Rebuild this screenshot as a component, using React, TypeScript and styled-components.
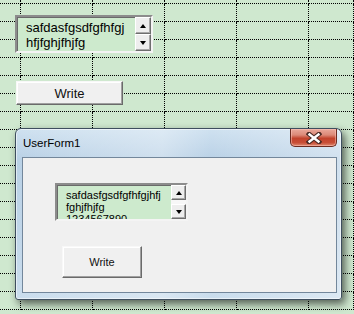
import React from "react";
import styled, { createGlobalStyle } from "styled-components";

const Global = createGlobalStyle`
  html, body { margin: 0; padding: 0; }
  body { width: 354px; height: 314px; overflow: hidden; background: #cfe8cf; font-family: "Liberation Sans", Arial, sans-serif; }
`;

const Page = styled.div`
  position: relative;
  width: 354px;
  height: 314px;
  overflow: hidden;
  background: #cfe8cf;
`;

const SheetGrid = styled.div`
  display: grid;
  grid-template-columns: 21px repeat(4, 72px) 1fr;
  grid-template-rows: 4px repeat(17, 18px);
  width: 354px;
  height: 314px;
`;

const Cell = styled.div`
  box-sizing: border-box;
  border-right: 1px dotted #000;
  border-bottom: 1px dotted #000;
`;

const SheetLayer = styled.div`
  position: absolute;
  inset: 0;
  padding: 15px 0 0 15px;
  display: flex;
  flex-direction: column;
  align-items: flex-start;
`;

const ListBox = styled.div<{ $w: number; $h: number; $font: number; $lh: number; $padTop: number; $padLeft: number }>`
  box-sizing: border-box;
  width: ${(p) => p.$w}px;
  height: ${(p) => p.$h}px;
  display: flex;
  background: #cdeacd;
  border: 2px solid;
  border-color: #8c8c8c #f4f4f4 #f4f4f4 #8c8c8c;
  box-shadow: inset 1px 1px 0 #6a6a6a;
  overflow: hidden;
  font-size: ${(p) => p.$font}px;
  line-height: ${(p) => p.$lh}px;
  color: #000;
  .items {
    flex: 1;
    padding: ${(p) => p.$padTop}px 0 0 ${(p) => p.$padLeft}px;
    white-space: nowrap;
    overflow: hidden;
  }
`;

const ScrollCol = styled.div<{ $w: number }>`
  width: ${(p) => p.$w}px;
  display: flex;
  flex-direction: column;
  justify-content: space-between;
  background: #f7f7f7;
`;

const ScrollBtn = styled.div<{ $h: number }>`
  box-sizing: border-box;
  height: ${(p) => p.$h}px;
  background: #eeeeee;
  border-top: 1px solid #ffffff;
  border-left: 1px solid #ffffff;
  border-right: 1px solid #6e6e6e;
  border-bottom: 1px solid #6e6e6e;
  box-shadow: inset -1px -1px 0 #a8a8a8;
  display: flex;
  align-items: center;
  justify-content: center;
`;

const Arrow = styled.div<{ $down?: boolean }>`
  width: 0;
  height: 0;
  border-left: 3.5px solid transparent;
  border-right: 3.5px solid transparent;
  ${(p) => (p.$down ? "border-top: 4px solid #000;" : "border-bottom: 4px solid #000;")}
`;

const Button = styled.div<{ $w: number; $h: number; $font: number }>`
  box-sizing: border-box;
  width: ${(p) => p.$w}px;
  height: ${(p) => p.$h}px;
  background: #f0f0f0;
  border-top: 1px solid #f8f8f8;
  border-left: 1px solid #f8f8f8;
  border-right: 1px solid #6a6a6a;
  border-bottom: 1px solid #6a6a6a;
  box-shadow: inset -1px -1px 0 #a0a0a0, inset 1px 1px 0 #ffffff;
  display: flex;
  align-items: center;
  justify-content: center;
  font-size: ${(p) => p.$font}px;
  color: #111;
`;

const SheetButton = styled(Button)`
  margin-top: 28px;
  margin-left: 1px;
`;

const Window = styled.div`
  position: absolute;
  left: 15px;
  top: 128px;
  width: 327px;
  height: 172px;
  box-sizing: border-box;
  border: 1px solid #3e4e5e;
  border-radius: 6px 6px 3px 3px;
  background:
    linear-gradient(90deg, rgba(255,255,255,0) 0%, rgba(255,255,255,0.3) 45%, rgba(255,255,255,0) 60%, rgba(255,255,255,0.35) 100%),
    linear-gradient(180deg, #cfe1f0 0%, #b9d1e6 18%, #c0d6e9 60%, #cadded 100%);
  box-shadow: 3px 4px 9px rgba(0, 0, 0, 0.6), inset 0 0 0 1px rgba(255,255,255,0.55);
  padding: 0 4px 6px 6px;
  display: flex;
  flex-direction: column;
`;

const TitleBar = styled.div`
  height: 28px;
  display: flex;
  align-items: flex-start;
`;

const Title = styled.div`
  line-height: 28px;
  font-size: 11.5px;
  color: #000;
  padding-left: 1px;
`;

const CloseBtn = styled.div`
  margin-left: auto;
  box-sizing: border-box;
  width: 47px;
  height: 18px;
  border: 1px solid #6b2b20;
  border-top: none;
  border-radius: 0 0 5px 5px;
  background: linear-gradient(180deg, #eaa99b 0%, #dc8a78 35%, #c2432c 55%, #c84e36 80%, #dd8a70 100%);
  box-shadow: inset 0 0 0 1px rgba(255, 200, 190, 0.5);
  display: flex;
  align-items: center;
  justify-content: center;
`;

const Client = styled.div`
  flex: 1;
  box-sizing: border-box;
  background: #f0f0f0;
  border: 1px solid #73879b;
  padding: 25px 0 0 32px;
  display: flex;
  flex-direction: column;
  align-items: flex-start;
`;

const FormButton = styled(Button)`
  margin-top: 25px;
  margin-left: 7px;
`;

const items = ["safdasfgsdfgfhfgjhfj", "fghjfhjfg", "1234567890"];
const sheetItems = ["safdasfgsdfgfhfgj", "hfjfghjfhjfg", "1234567890"];

export default function App() {
  const cells = Array.from({ length: 18 * 6 });
  return (
    <Page>
      <Global />
      <SheetGrid>
        {cells.map((_, i) => (
          <Cell key={i} />
        ))}
      </SheetGrid>
      <SheetLayer>
        <ListBox $w={138} $h={38} $font={13} $lh={15} $padTop={3} $padLeft={9}>
          <div className="items">
            {sheetItems.map((t) => (
              <div key={t}>{t}</div>
            ))}
          </div>
          <ScrollCol $w={16}>
            <ScrollBtn $h={17}>
              <Arrow />
            </ScrollBtn>
            <ScrollBtn $h={17}>
              <Arrow $down />
            </ScrollBtn>
          </ScrollCol>
        </ListBox>
        <SheetButton $w={107} $h={24} $font={13}>
          Write
        </SheetButton>
      </SheetLayer>
      <Window>
        <TitleBar>
          <Title>UserForm1</Title>
          <CloseBtn>
            <svg width="16" height="12" viewBox="0 0 16 12">
              <path d="M3 2 L13 10 M13 2 L3 10" stroke="#4a2a24" strokeWidth="4.6" strokeLinecap="square" />
              <path d="M3.5 2.5 L12.5 9.5 M12.5 2.5 L3.5 9.5" stroke="#ffffff" strokeWidth="2.4" strokeLinecap="square" />
            </svg>
          </CloseBtn>
        </TitleBar>
        <Client>
          <ListBox $w={133} $h={38} $font={11} $lh={12} $padTop={4} $padLeft={9}>
            <div className="items">
              {items.map((t) => (
                <div key={t}>{t}</div>
              ))}
            </div>
            <ScrollCol $w={15}>
              <ScrollBtn $h={15}>
                <Arrow />
              </ScrollBtn>
              <ScrollBtn $h={15}>
                <Arrow $down />
              </ScrollBtn>
            </ScrollCol>
          </ListBox>
          <FormButton $w={80} $h={32} $font={11}>
            Write
          </FormButton>
        </Client>
      </Window>
    </Page>
  );
}
